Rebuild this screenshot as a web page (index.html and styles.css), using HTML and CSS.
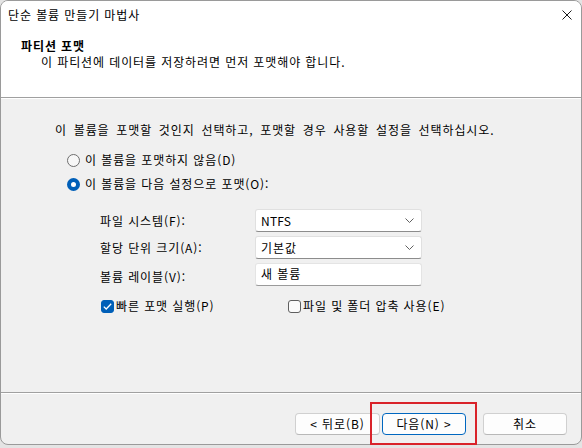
FILE: index.html
```html
<!DOCTYPE html>
<html lang="ko">
<head>
<meta charset="utf-8">
<title>단순 볼륨 만들기 마법사</title>
<link rel="stylesheet" href="styles.css">
</head>
<body>
<div class="window">
  <div class="top">
    <div class="titlebar">
      <span class="title">단순 볼륨 만들기 마법사</span>
      <svg class="close" width="10" height="10" viewBox="0 0 10 10"><path d="M0.5 0.5 L9.5 9.5 M9.5 0.5 L0.5 9.5" stroke="#1a1a1a" stroke-width="1"/></svg>
    </div>
    <div class="header">
      <div class="h-title">파티션 포맷</div>
      <div class="h-sub">이 파티션에 데이터를 저장하려면 먼저 포맷해야 합니다.</div>
    </div>
  </div>
  <div class="sep"></div>
  <div class="content">
    <p class="intro">이 볼륨을 포맷할 것인지 선택하고, 포맷할 경우 사용할 설정을 선택하십시오.</p>
    <div class="radios">
      <div class="radio-row"><span class="radio"></span><span>이 볼륨을 포맷하지 않음(D)</span></div>
      <div class="radio-row"><span class="radio checked"></span><span>이 볼륨을 다음 설정으로 포맷(O):</span></div>
    </div>
    <div class="fields">
      <span class="label">파일 시스템(F):</span>
      <div class="select"><span class="latin">NTFS</span><svg width="9" height="5" viewBox="0 0 9 5"><path d="M0.5 0.5 L4.5 4.5 L8.5 0.5" fill="none" stroke="#606060" stroke-width="1"/></svg></div>
      <span class="label">할당 단위 크기(A):</span>
      <div class="select"><span>기본값</span><svg width="9" height="5" viewBox="0 0 9 5"><path d="M0.5 0.5 L4.5 4.5 L8.5 0.5" fill="none" stroke="#606060" stroke-width="1"/></svg></div>
      <span class="label label-low">볼륨 레이블(V):</span>
      <div class="textbox">새 볼륨</div>
    </div>
    <div class="checks">
      <div class="check-item first"><span class="checkbox checked"><svg width="9" height="7" viewBox="0 0 9 7"><path d="M0.8 3.6 L3.2 6 L8.2 0.8" fill="none" stroke="#fff" stroke-width="1.3"/></svg></span><span>빠른 포맷 실행(P)</span></div>
      <div class="check-item"><span class="checkbox"></span><span>파일 및 폴더 압축 사용(E)</span></div>
    </div>
  </div>
  <div class="sep"></div>
  <div class="footer">
    <button class="btn">&lt; 뒤로(B)</button>
    <div class="next-wrap">
      <button class="btn primary">다음(N) &gt;</button>
      <span class="highlight"></span>
    </div>
    <button class="btn cancel">취소</button>
  </div>
</div>
</body>
</html>
```
FILE: styles.css
```css
html, body {
  margin: 0;
  padding: 0;
}
body {
  width: 582px;
  height: 448px;
  background: #e4e4e4;
  font-family: "Noto Sans CJK KR", "Noto Sans", sans-serif;
  font-size: 12px;
  letter-spacing: 0.9px;
  color: #000;
  overflow: hidden;
}
.window {
  width: 582px;
  height: 445px;
  box-sizing: border-box;
  border: 1px solid #9a9a9a;
  border-radius: 8px;
  background: #f0f0f0;
  display: flex;
  flex-direction: column;
}
.top {
  background: #fff;
  height: 96px;
  border-radius: 7px 7px 0 0;
}
.titlebar {
  height: 27px;
  display: flex;
  align-items: center;
  justify-content: space-between;
  padding: 0 9px 0 7px;
  line-height: 16px;
}
.header {
  padding: 10px 0 0 20px;
  line-height: 16px;
}
.h-title {
  font-weight: bold;
}
.h-sub {
  padding-left: 20px;
}
.sep {
  height: 0;
  border-top: 1px solid #a0a0a0;
  border-bottom: 1px solid #fff;
}
.content {
  flex: 1;
  padding: 23px 0 0 54px;
  line-height: 16px;
}
.intro {
  margin: 0;
  word-spacing: 2.5px;
}
.radios {
  margin-top: 10px;
  padding-left: 12px;
}
.radio-row {
  height: 24px;
  display: flex;
  align-items: center;
}
.radio {
  width: 13px;
  height: 13px;
  box-sizing: border-box;
  border: 1px solid #6e6e6e;
  border-radius: 50%;
  background: #f7f7f7;
  margin-right: 5px;
  flex: none;
}
.radio.checked {
  border: 4px solid #005fb8;
  background: #fff;
}
.fields {
  margin-top: 13px;
  padding-left: 45px;
  display: grid;
  grid-template-columns: 155px 167px;
  grid-auto-rows: 23px;
  row-gap: 4px;
  align-items: center;
}
.label-low {
  padding-top: 5px;
}
.select, .textbox {
  height: 23px;
  box-sizing: border-box;
  background: #fff;
  border: 1px solid #e0e0e0;
  border-bottom-color: #8c8c8c;
  border-radius: 3px;
  display: flex;
  align-items: center;
  justify-content: space-between;
  padding: 0 7px 0 5px;
}
.latin {
  letter-spacing: 0.2px;
}
.textbox {
  align-items: flex-start;
  padding-top: 2px;
  border-color: #e4e4e4;
  border-bottom-color: #9a9a9a;
}
.checks {
  margin-top: 10px;
  padding-left: 46px;
  display: flex;
  height: 20px;
  align-items: center;
}
.check-item {
  display: flex;
  align-items: center;
}
.check-item.first {
  width: 187px;
}
.checkbox {
  width: 13px;
  height: 13px;
  box-sizing: border-box;
  border: 1px solid #5f5f5f;
  border-radius: 3px;
  background: #fbfbfb;
  margin-right: 2px;
  display: flex;
  align-items: center;
  justify-content: center;
  flex: none;
}
.checkbox.checked {
  background: #005fb8;
  border-color: #005fb8;
}
.footer {
  height: 50px;
  box-sizing: border-box;
  padding: 19px 14px 0 0;
  display: flex;
  justify-content: flex-end;
  align-items: flex-start;
  border-radius: 0 0 7px 7px;
}
.btn {
  width: 85px;
  height: 22px;
  box-sizing: border-box;
  background: #fdfdfd;
  border: 1px solid #d0d0d0;
  border-bottom-color: #b8b8b8;
  border-radius: 4px;
  font-family: inherit;
  font-size: 12px;
  letter-spacing: inherit;
  color: #000;
  padding: 0;
  line-height: 18px;
}
.next-wrap {
  position: relative;
  margin-left: 2px;
}
.btn.primary {
  width: 84px;
  border: 1px solid #0067c0;
}
.btn.cancel {
  width: 84px;
  margin-left: 17px;
}
.highlight {
  position: absolute;
  left: -12px;
  top: -11px;
  width: 107px;
  height: 43px;
  box-sizing: border-box;
  border: 2px solid #d9232a;
  pointer-events: none;
}
```
